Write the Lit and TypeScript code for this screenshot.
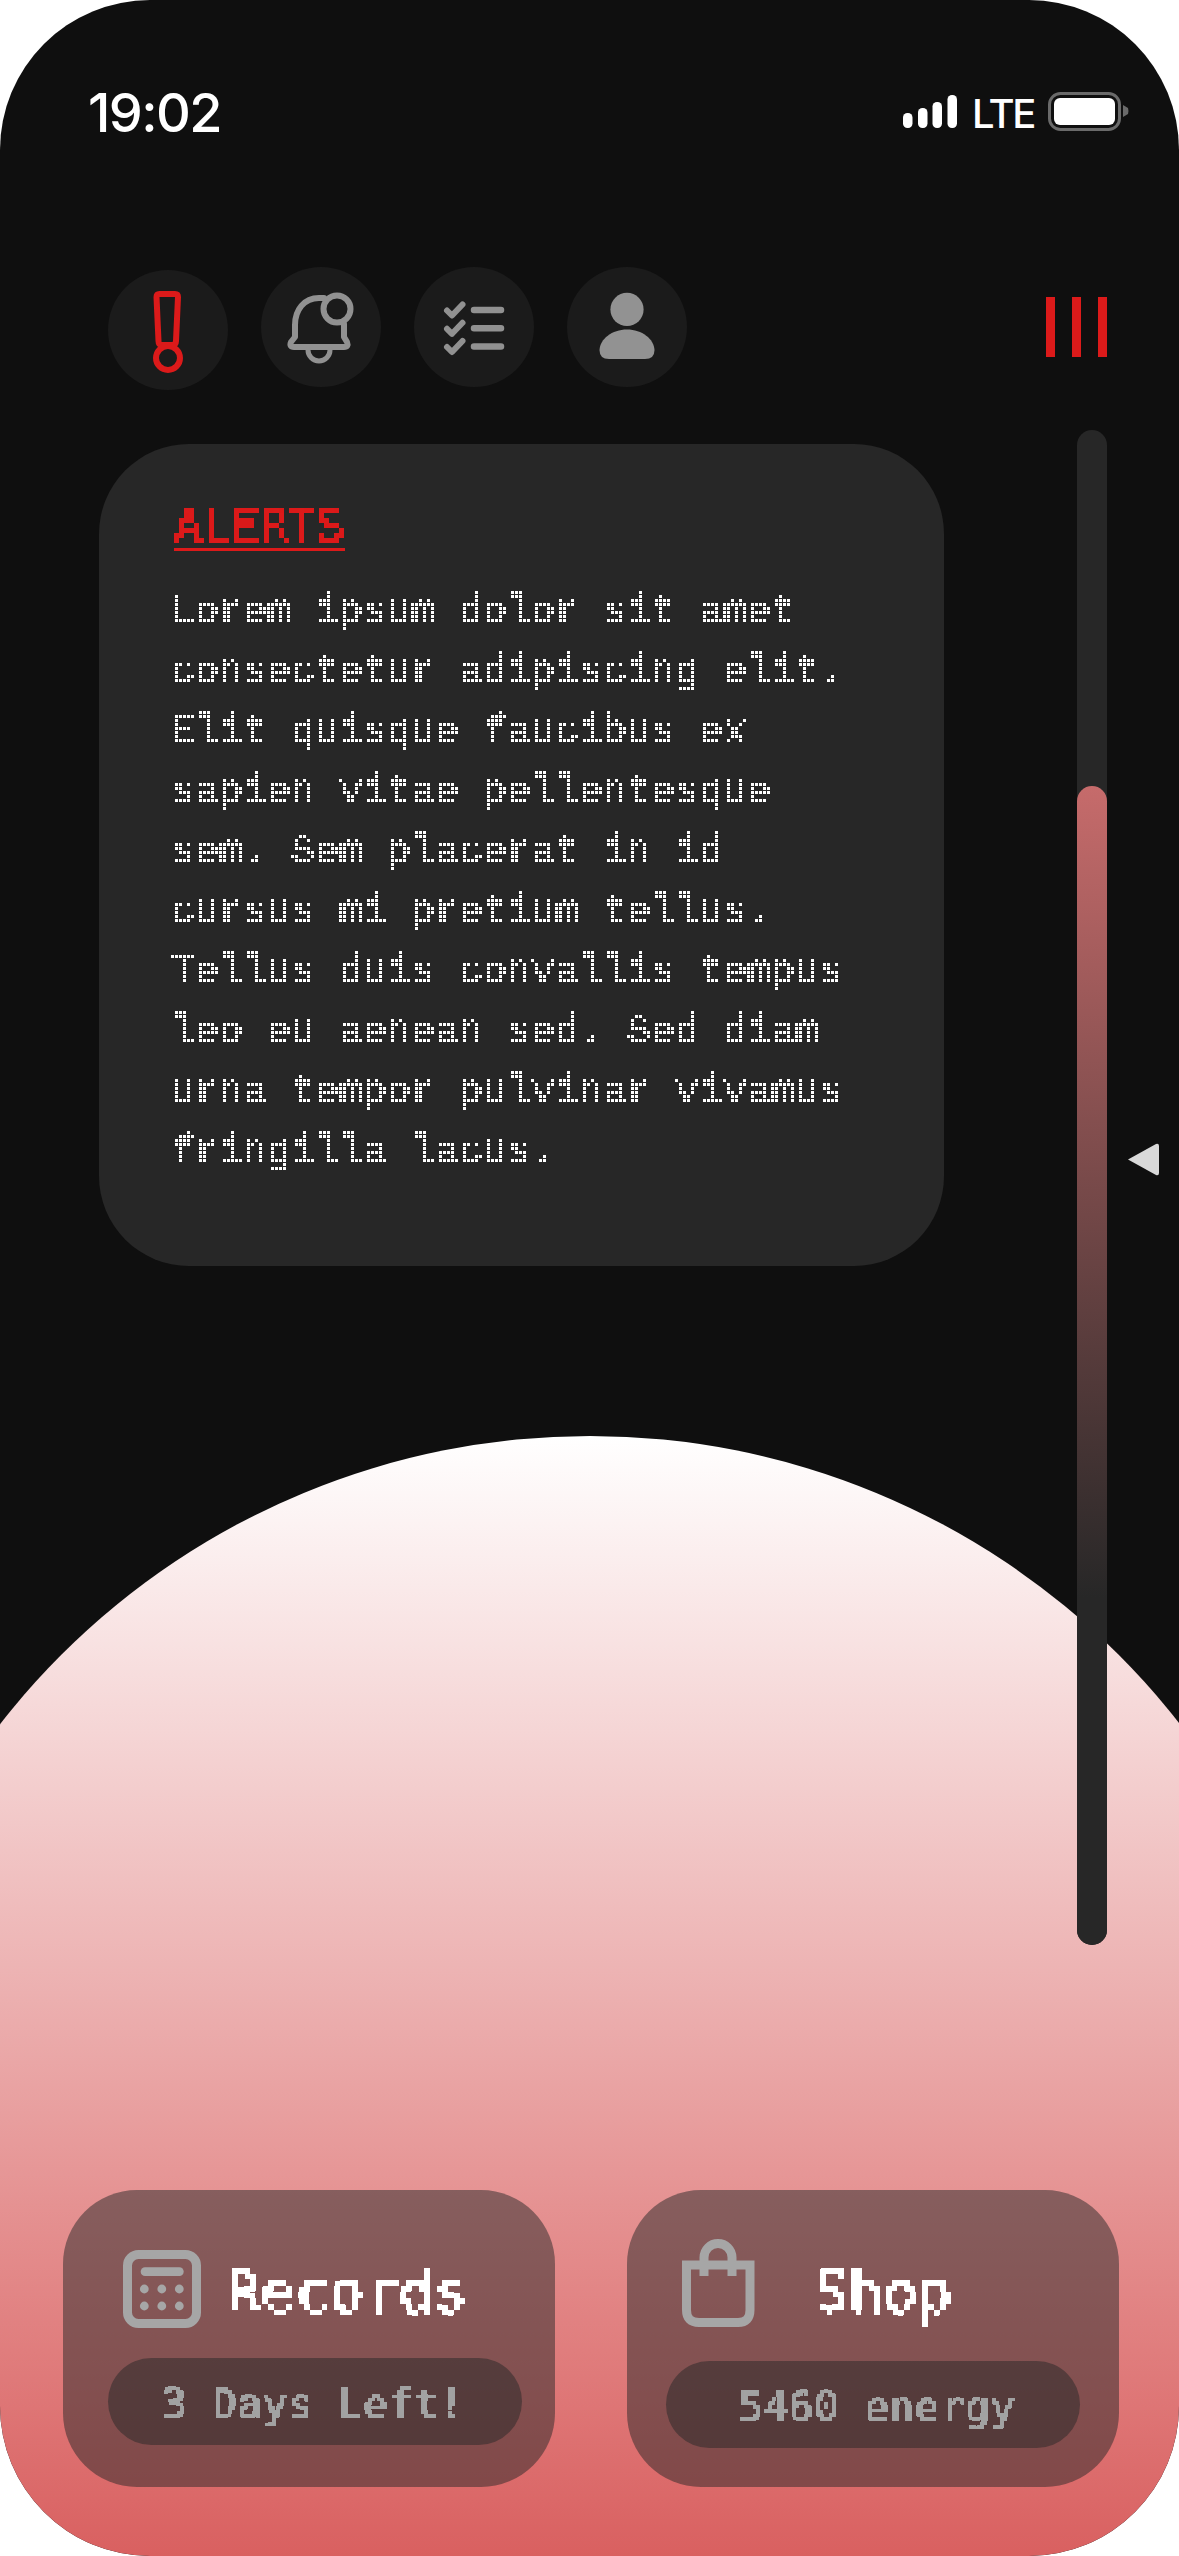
import { LitElement, html, svg, css } from "lit";
import { customElement } from "lit/decorators.js";

const BODY = "Lorem ipsum dolor sit amet consectetur adipiscing elit. Elit quisque faucibus ex sapien vitae pellentesque sem. Sem placerat in id cursus mi pretium tellus. Tellus duis convallis tempus leo eu aenean sed. Sed diam urna tempor pulvinar vivamus fringilla lacus.";

@customElement("app-root")
export class AppRoot extends LitElement {
  static styles = css`
    :host { display: block; width: 1179px; height: 2556px; background: #fff; font-family: "DejaVu Sans Mono", monospace; }
    * { box-sizing: border-box; }
    .defs { display: block; width: 0; height: 0; }
    .phone { position: relative; width: 1179px; height: 2556px; border-radius: 150px; overflow: hidden; background: #0f0f0f; display: flex; flex-direction: column; }
    .hill { position: absolute; left: -158px; top: 1436px; width: 1496px; height: 1120px; border-radius: 748px 748px 0 0; background: linear-gradient(180deg, #ffffff, #d96060); }
    .status { position: relative; height: 267px; padding: 82px 49px 0 88px; display: flex; justify-content: space-between; align-items: flex-start; font-family: Inter, sans-serif; color: #fff; font-weight: 500; }
    .time { font-size: 54px; line-height: 62px; letter-spacing: -1.6px; }
    .sys { display: flex; align-items: flex-start; padding-top: 13px; }
    .lte { font-size: 40px; line-height: 38px; letter-spacing: -2.4px; margin: 0 14px 0 15px; }
    .toolbar { position: relative; height: 163px; padding: 0 72px 0 108px; display: flex; align-items: flex-start; gap: 33px; }
    .round { width: 120px; height: 120px; border-radius: 50%; background: #1b1b1b; flex: none; display: block; }
    .round.first { margin-top: 3px; }
    .bars { margin-left: auto; margin-top: 30px; display: flex; gap: 17px; }
    .bars i { display: block; width: 9px; height: 60px; background: #dc1a1a; }
    .middle { position: relative; display: flex; align-items: flex-start; padding-left: 99px; }
    .alert { width: 845px; height: 822px; margin-top: 14px; border-radius: 90px; background: #272727; padding: 60px 70px 0 75px; }
    .title { width: 171px; height: 48px; border-bottom: 3px solid #dc1a1a; }
    .title span { display: block; color: #dc1a1a; font-size: 48px; line-height: 45px; letter-spacing: -0.4px; height: 45px; margin-top: -1px; filter: url(#px5); -webkit-text-stroke: 1.3px #dc1a1a; width: 180px; }
    .copy { margin: 32px 0 0 -3px; width: 690px; font-family: "Liberation Mono", monospace; color: #fff; font-size: 40px; line-height: 60px; -webkit-text-stroke: 1.1px #fff; filter: url(#dots); padding-bottom: 8px; }
    .track { margin-left: 133px; width: 30px; height: 1515px; border-radius: 15px; background: #272727; display: flex; flex-direction: column; justify-content: flex-end; }
    .fill { height: 1159px; border-radius: 15px; background: linear-gradient(180deg, #c66b6b 0%, #272727 70%); }
    .handle { display: block; margin: 712px 0 0 21px; }
    .actions { position: relative; margin-top: auto; padding: 0 60px 69px 63px; display: flex; gap: 72px; }
    .action { width: 492px; height: 297px; border-radius: 74px; background: rgba(39, 39, 39, .5); }
    .head { display: flex; align-items: flex-start; }
    .records .head { height: 168px; padding: 60px 0 0 60px; gap: 25px; }
    .shop .head { height: 171px; padding: 49px 0 0 55px; gap: 59px; }
    .name { display: block; color: #fff; font-size: 57px; line-height: 60px; letter-spacing: 0.3px; -webkit-text-stroke: 0.8px #fff; filter: url(#px6); height: 72px; width: 250px; }
    .records .name { margin-top: 12px; }
    .shop .name { margin-top: 23px; }
    .pill { width: 414px; height: 87px; border-radius: 44px; background: rgba(39, 39, 39, .5); display: flex; align-items: center; justify-content: center; }
    .records .pill { margin-left: 45px; }
    .shop .pill { margin-left: 39px; }
    .note { color: #a2a2a2; font-size: 41px; line-height: 48px; letter-spacing: .5px; -webkit-text-stroke: 0.7px #a2a2a2; filter: url(#px4); padding: 6px 10px 0 6px; height: 56px; }
    .shop .note { padding-left: 18px; }
    .gray { fill: none; stroke: #919191; stroke-width: 6; stroke-linecap: round; stroke-linejoin: round; }
    .solid { fill: #929292; }
    .red { fill: none; stroke: #dc1a1a; stroke-width: 6; stroke-linejoin: round; }
    .light { fill: none; stroke: #a6a6a6; stroke-width: 9; }
    .lightfill { fill: #a6a6a6; }
  `;

  private pixelFilter(id: string, pitch: number, spot: number, grow: number, offset: number) {
    return svg`<filter id=${id} x="0" y="0" width="100%" height="100%" color-interpolation-filters="sRGB">
      <feComponentTransfer in="SourceGraphic" result="solid"><feFuncA type="discrete" tableValues="0 1"></feFuncA></feComponentTransfer>
      <feFlood x=${offset} y=${offset} width=${spot} height=${spot} flood-color="#000"></feFlood>
      <feComposite x="0" y="0" width=${pitch} height=${pitch}></feComposite>
      <feTile result="grid"></feTile>
      <feComposite in="solid" in2="grid" operator="in"></feComposite>
      <feMorphology operator="dilate" radius=${grow}></feMorphology>
    </filter>`;
  }

  render() {
    return html`
      <div class="phone">
        <div class="hill"></div>
        <div class="status">
          <div class="time">19:02</div>
          <div class="sys">
            <svg width="54" height="34" viewBox="0 0 54 34" fill="#fff">
              <rect x="0" y="18" width="9.5" height="15" rx="4.5"></rect>
              <rect x="15" y="13" width="9.5" height="20" rx="4.5"></rect>
              <rect x="29.5" y="7" width="9.5" height="26" rx="4.5"></rect>
              <rect x="44.5" y="0" width="9.5" height="33" rx="4.5"></rect>
            </svg>
            <div class="lte">LTE</div>
            <svg style="margin-top:-3px" width="82" height="40" viewBox="0 0 82 40">
              <rect x="1.5" y="1.5" width="70" height="36" rx="11" fill="none" stroke="#6a6a6a" stroke-width="3"></rect>
              <rect x="6" y="6" width="61" height="27" rx="6" fill="#fff"></rect>
              <path d="M75 13 L80 16 Q81 19 80 22 L75 25 Z" fill="#6a6a6a"></path>
            </svg>
          </div>
        </div>

        <div class="toolbar">
          <svg class="round first" viewBox="0 0 120 120">
            <path class="red" d="M48.5 27 Q48.5 24 51.5 24 H67 Q70 24 70 27 L68 71 Q68 75 64 75 H54 Q50.500 75 50.500 71 Z"></path>
            <circle class="red" cx="60" cy="88" r="12"></circle>
          </svg>
          <svg class="round" viewBox="0 0 120 120">
            <path class="gray" d="M63 31 H58 C43 31 34 43 34 58 V70 L30 75 Q28 80 33 80 H83 Q88 80 86 75 L83 70 V57"></path>
            <circle class="gray" cx="76" cy="42" r="13.500"></circle>
            <path class="gray" style="stroke-width:5" d="M47 83 A11 11 0 0 0 69 83"></path>
          </svg>
          <svg class="round" viewBox="0 0 120 120">
            <path class="gray" d="M33 43.500 L38 48.500 L48.500 37.500 M33 61.800 L38 66.800 L48.500 55.800 M33 80 L38 85 L48.500 74"></path>
            <path class="gray" style="stroke-width:6.500" d="M60 43 H87 M60 61.300 H87 M60 79.600 H87"></path>
          </svg>
          <svg class="round" viewBox="0 0 120 120">
            <circle class="solid" cx="60" cy="42.400" r="16.600"></circle>
            <path class="solid" d="M42 92 H78 Q87.500 92 87.500 83 C87 72 75 62.500 60 62.500 C45 62.500 33 72 32.500 83 Q32.500 92 42 92 Z"></path>
          </svg>
          <div class="bars"><i></i><i></i><i></i></div>
        </div>

        <div class="middle">
          <section class="alert">
            <div class="title"><span>ALERTS</span></div>
            <p class="copy">${BODY}</p>
          </section>
          <div class="track"><div class="fill"></div></div>
          <svg class="handle" width="31" height="35" viewBox="0 0 31 35">
            <path d="M0 17.500 L28 2 Q31 1 31 4 V31 Q31 34 28 33 Z" fill="#d9d9d9"></path>
          </svg>
        </div>

        <div class="actions">
          <div class="action records">
            <div class="head">
              <svg width="78" height="78" viewBox="0 0 78 78">
                <rect class="light" x="4.500" y="4.500" width="69" height="69" rx="11"></rect>
                <rect class="lightfill" x="17.700" y="17.300" width="43" height="8.700" rx="4.300"></rect>
                <circle class="lightfill" cx="21.300" cy="39" r="4.400"></circle>
                <circle class="lightfill" cx="38.800" cy="39" r="4.400"></circle>
                <circle class="lightfill" cx="56.300" cy="39" r="4.400"></circle>
                <circle class="lightfill" cx="21.300" cy="56" r="4.400"></circle>
                <circle class="lightfill" cx="38.800" cy="56" r="4.400"></circle>
                <circle class="lightfill" cx="56.300" cy="56" r="4.400"></circle>
              </svg>
              <span class="name">Records</span>
            </div>
            <div class="pill"><span class="note">3 Days Left!</span></div>
          </div>
          <div class="action shop">
            <div class="head">
              <svg width="73" height="88" viewBox="0 0 73 88">
                <path class="light" d="M4.500 26 H68 V71 Q68 83.500 56 83.500 H17 Q4.500 83.500 4.500 71 Z"></path>
                <path class="light" d="M22 37 V18.500 A14 14 0 0 1 50 18.500 V37"></path>
              </svg>
              <span class="name">Shop</span>
            </div>
            <div class="pill"><span class="note">5460 energy</span></div>
          </div>
        </div>
      </div>
      <svg class="defs" aria-hidden="true">
        ${this.pixelFilter("dots", 4, 1, 1, 1)}
        ${this.pixelFilter("px4", 4, 2, 1, 1)}
        ${this.pixelFilter("px5", 5, 1, 2, 2)}
        ${this.pixelFilter("px6", 6, 2, 2, 2)}
      </svg>
    `;
  }
}
